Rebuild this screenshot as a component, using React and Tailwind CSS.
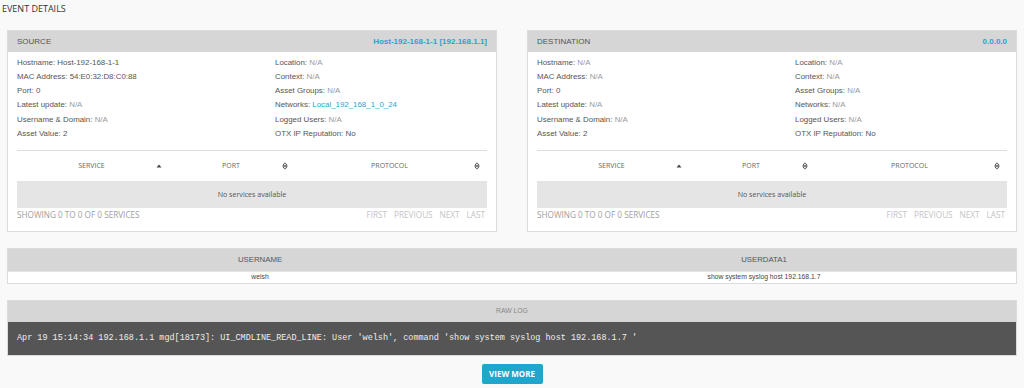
import React from "react";

const SANS = "font-['Liberation_Sans',Arial,sans-serif]";
const OPEN = "font-['Open_Sans',sans-serif]";

function SortUp() {
  return (
    <svg width="6" height="6" viewBox="0 0 6 6" className="shrink-0">
      <path d="M0.5 4.5 L3 1.5 L5.5 4.5 Z" fill="#444" />
    </svg>
  );
}
function SortBoth() {
  return (
    <svg width="6" height="8" viewBox="0 0 6 8" className="shrink-0">
      <path d="M0.8 3.3 L3 0.8 L5.2 3.3 Z" fill="none" stroke="#555" strokeWidth="0.9" />
      <path d="M0.8 4.7 L3 7.2 L5.2 4.7 Z" fill="none" stroke="#555" strokeWidth="0.9" />
    </svg>
  );
}

function Field({ label, value, link }) {
  const isNA = value === "N/A";
  return (
    <div className="h-[14.33px] leading-[14.33px] whitespace-nowrap">
      <span className="text-[#555]">{label}: </span>
      <span className={link ? "text-[#2aa5d1]" : isNA ? "text-[#9a9a9a]" : "text-[#555]"}>{value}</span>
    </div>
  );
}

function Panel({ title, link, left, right }) {
  return (
    <div className="w-[490px] h-[202px] border border-[#dcdcdc] bg-white flex flex-col">
      <div className={`h-[21px] bg-[#d6d6d6] flex items-center justify-between px-[9px] ${SANS} text-[8px]`}>
        <span className="text-[#555]">{title}</span>
        <span className="text-[#27a4d0] font-bold">{link}</span>
      </div>
      <div className="px-[9px] flex flex-col">
        <div className={`flex pt-[3.5px] ${SANS} text-[7.9px]`}>
          <div className="w-[258px] flex flex-col">
            {left.map((f) => (
              <Field key={f[0]} label={f[0]} value={f[1]} link={f[2]} />
            ))}
          </div>
          <div className="flex-1 flex flex-col">
            {right.map((f) => (
              <Field key={f[0]} label={f[0]} value={f[1]} link={f[2]} />
            ))}
          </div>
        </div>
        <div className={`mt-[8.5px] border-t border-[#dedede] ${OPEN}`}>
          <div className="h-[30px] flex items-center text-[7px] text-[#666]">
            <div className="w-[153px] flex items-center pl-[10px] pr-[8px]">
              <span className="flex-1 text-center">SERVICE</span>
              <SortUp />
            </div>
            <div className="w-[125px] flex items-center pl-[10px] pr-[7px]">
              <span className="flex-1 text-center">PORT</span>
              <SortBoth />
            </div>
            <div className="flex-1 flex items-center pl-[10px] pr-[7px]">
              <span className="flex-1 text-center">PROTOCOL</span>
              <SortBoth />
            </div>
          </div>
          <div className="h-[27px] bg-[#e5e5e5] flex items-center justify-center text-[7.1px] text-[#555]">
            No services available
          </div>
          <div className="h-[14px] flex items-center justify-between text-[8.2px] text-[#a0a0a0]">
            <span>SHOWING 0 TO 0 OF 0 SERVICES</span>
            <span className="flex gap-[7px] text-[#c4c4c4] pr-[2px]">
              <span>FIRST</span>
              <span>PREVIOUS</span>
              <span>NEXT</span>
              <span>LAST</span>
            </span>
          </div>
        </div>
      </div>
    </div>
  );
}

export default function App() {
  return (
    <div className="w-[1024px] h-[388px] bg-[#f9f9f9] overflow-hidden flex flex-col">
      <div className={`h-[17px] px-[2px] flex items-center ${OPEN} text-[9px] text-[#333]`}>EVENT DETAILS</div>
      <div className="mt-[13px] px-[7px] flex gap-[30px]">
        <Panel
          title="SOURCE"
          link="Host-192-168-1-1 [192.168.1.1]"
          left={[
            ["Hostname", "Host-192-168-1-1"],
            ["MAC Address", "54:E0:32:D8:C0:88"],
            ["Port", "0"],
            ["Latest update", "N/A"],
            ["Username & Domain", "N/A"],
            ["Asset Value", "2"],
          ]}
          right={[
            ["Location", "N/A"],
            ["Context", "N/A"],
            ["Asset Groups", "N/A"],
            ["Networks", "Local_192_168_1_0_24", true],
            ["Logged Users", "N/A"],
            ["OTX IP Reputation", "No"],
          ]}
        />
        <Panel
          title="DESTINATION"
          link="0.0.0.0"
          left={[
            ["Hostname", "N/A"],
            ["MAC Address", "N/A"],
            ["Port", "0"],
            ["Latest update", "N/A"],
            ["Username & Domain", "N/A"],
            ["Asset Value", "2"],
          ]}
          right={[
            ["Location", "N/A"],
            ["Context", "N/A"],
            ["Asset Groups", "N/A"],
            ["Networks", "N/A"],
            ["Logged Users", "N/A"],
            ["OTX IP Reputation", "No"],
          ]}
        />
      </div>

      <div className={`mt-[16px] mx-[7px] border border-[#dcdcdc] ${SANS}`}>
        <div className="h-[22px] bg-[#d6d6d6] grid grid-cols-2 items-center text-[7.8px] text-[#555]">
          <div className="text-center">USERNAME</div>
          <div className="text-center">USERDATA1</div>
        </div>
        <div className="h-[12px] bg-white grid grid-cols-2 items-center text-[6.8px] text-[#444] border-t border-[#e4e4e4]">
          <div className="text-center">welsh</div>
          <div className="text-center">show system syslog host 192.168.1.7</div>
        </div>
      </div>

      <div className="mt-[16px] mx-[7px] border border-[#dcdcdc]">
        <div className={`h-[21px] bg-[#d6d6d6] flex items-center justify-center ${SANS} text-[6.8px] text-[#888]`}>
          RAW LOG
        </div>
        <div className="h-[33px] bg-[#555555] flex items-center px-[9px] font-['Liberation_Mono',monospace] text-[8.47px] text-[#eeeeee] whitespace-pre">
          Apr 19 15:14:34 192.168.1.1 mgd[18173]: UI_CMDLINE_READ_LINE: User 'welsh', command 'show system syslog host 192.168.1.7 '
        </div>
      </div>

      <div className="mt-[8px] flex justify-center">
        <div className={`w-[61px] h-[20px] rounded-[2px] bg-[#1ea6cd] flex items-center justify-center ${OPEN} font-bold text-[8px] text-white`}>
          VIEW MORE
        </div>
      </div>
    </div>
  );
}
